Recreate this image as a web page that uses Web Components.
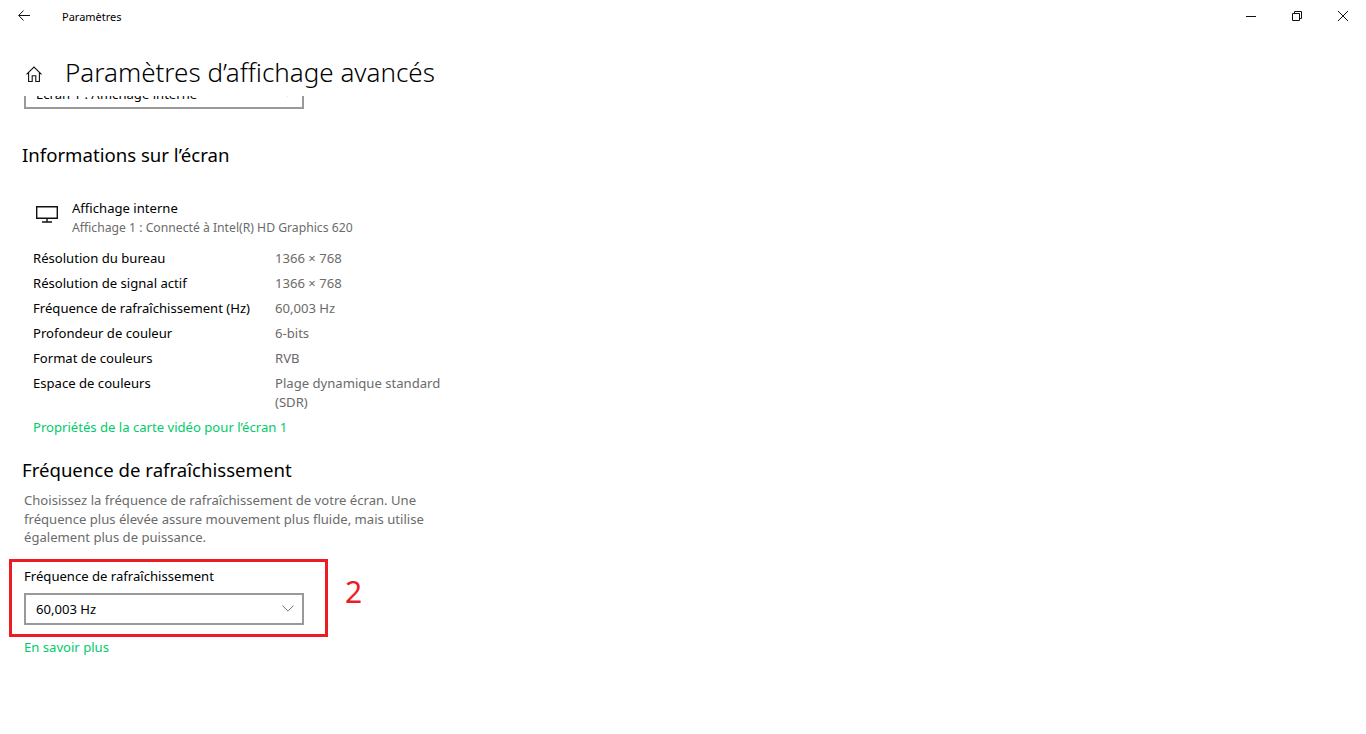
<!DOCTYPE html>
<html>
    <head>
        <style>
            html, body { margin: 0; height: 100%; background: #fff; }
            body { font-family: "Noto Sans", "Open Sans", sans-serif; color: #000; overflow: hidden; }
        </style>
    </head>
    <body>
        <settings-app>
            <title-bar slot="bar">Paramètres</title-bar>
            <page-header slot="head">Paramètres d’affichage avancés</page-header>

            <combo-box>Écran 1 : Affichage interne</combo-box>

            <section-title style="margin-top:32px">Informations sur l’écran</section-title>
            <display-card name="Affichage interne" sub="Affichage 1 : Connecté à Intel(R) HD Graphics 620"></display-card>
            <info-row label="Résolution du bureau">1366 × 768</info-row>
            <info-row label="Résolution de signal actif">1366 × 768</info-row>
            <info-row label="Fréquence de rafraîchissement (Hz)">60,003 Hz</info-row>
            <info-row label="Profondeur de couleur">6-bits</info-row>
            <info-row label="Format de couleurs">RVB</info-row>
            <info-row label="Espace de couleurs">Plage dynamique standard<br>(SDR)</info-row>
            <green-link style="margin:3px 0 0 11px">Propriétés de la carte vidéo pour l’écran 1</green-link>

            <section-title style="margin-top:19px">Fréquence de rafraîchissement</section-title>
            <help-text>Choisissez la fréquence de rafraîchissement de votre écran. Une fréquence plus élevée assure mouvement plus fluide, mais utilise également plus de puissance.</help-text>
            <field-label>Fréquence de rafraîchissement</field-label>
            <combo-box>60,003 Hz</combo-box>
            <green-link style="margin:13px 0 0 2px">En savoir plus</green-link>

            <red-note slot="over"></red-note>
        </settings-app>

        <script>
            class SettingsApp extends HTMLElement {
                constructor() {
                    super();
                    const shadowRoot = this.attachShadow({ mode: 'open' });
                    shadowRoot.innerHTML = `
                        <style>
                            :host { display: flex; flex-direction: column; height: 734px; position: relative; }
                            .scroll { flex: 1; overflow: hidden; min-height: 0; }
                            .inner { margin: -19px 0 0 22px; width: 420px; display: flex; flex-direction: column; align-items: flex-start; }
                        </style>
                        <slot name="bar"></slot>
                        <slot name="head"></slot>
                        <div class="scroll"><div class="inner"><slot></slot></div></div>
                        <slot name="over"></slot>
                    `;
                }
            }
            window.customElements.define('settings-app', SettingsApp);

            class TitleBar extends HTMLElement {
                constructor() {
                    super();
                    const shadowRoot = this.attachShadow({ mode: 'open' });
                    shadowRoot.innerHTML = `
                        <style>
                            :host { display: flex; align-items: center; height: 32px; font-size: 11px; }
                            .back { width: 48px; height: 32px; display: flex; align-items: center; justify-content: center; margin-right: 14px; }
                            .title { flex: 1; padding-top: 1px; }
                            .btn { width: 46px; height: 32px; display: flex; align-items: center; justify-content: center; }
                            svg { display: block; fill: none; stroke: #111; stroke-width: 1; }
                        </style>
                        <div class="back">
                            <svg width="12" height="11" viewBox="0 0 12 11" style="margin-top:-1px"><path d="M12 5.5H.8M5.5 .5 .7 5.5 5.5 10.5"/></svg>
                        </div>
                        <div class="title"><slot></slot></div>
                        <div class="btn"><svg width="10" height="10" viewBox="0 0 10 10"><path d="M0 5.5H10"/></svg></div>
                        <div class="btn"><svg width="10" height="10" viewBox="0 0 10 10"><path d="M.5 2.5H7.5V9.5H.5ZM2.5 2.5V.5H9.5V7.5H7.5"/></svg></div>
                        <div class="btn"><svg width="10" height="10" viewBox="0 0 10 10"><path d="M0 0 10 10M10 0 0 10"/></svg></div>
                    `;
                }
            }
            window.customElements.define('title-bar', TitleBar);

            class PageHeader extends HTMLElement {
                constructor() {
                    super();
                    const shadowRoot = this.attachShadow({ mode: 'open' });
                    shadowRoot.innerHTML = `
                        <style>
                            :host { display: flex; align-items: center; height: 64px; padding: 26px 0 10px 26px; box-sizing: border-box; font-size: 26px; font-weight: 300; line-height: 28px; }
                            svg { display: block; margin: 3px 23px 0 0; fill: none; stroke: #111; stroke-width: 1.1; }
                            span { white-space: nowrap; }
                        </style>
                        <svg width="16" height="16" viewBox="0 0 16 16"><path d="M.5 8.4 8 1l7.5 7.4M2.6 6.5V15.5H6.2V9.8H9.8V15.5H13.4V6.5"/></svg>
                        <span><slot></slot></span>
                    `;
                }
            }
            window.customElements.define('page-header', PageHeader);

            class ComboBox extends HTMLElement {
                constructor() {
                    super();
                    const shadowRoot = this.attachShadow({ mode: 'open' });
                    shadowRoot.innerHTML = `
                        <style>
                            :host { display: flex; align-items: center; justify-content: space-between; width: 280px; height: 32px; box-sizing: border-box; border: 2px solid #999; margin-left: 2px; padding: 0 8px 0 10px; font-size: 13.1px; line-height: 13px; }
                            span { padding-top: 2px; }
                            svg { display: block; fill: none; stroke: #777; stroke-width: 1; }
                        </style>
                        <span><slot></slot></span>
                        <svg width="12" height="7" viewBox="0 0 12 7"><path d="M.4 .5 6 6.1 11.6 .5"/></svg>
                    `;
                }
            }
            window.customElements.define('combo-box', ComboBox);

            class SectionTitle extends HTMLElement {
                constructor() {
                    super();
                    const shadowRoot = this.attachShadow({ mode: 'open' });
                    shadowRoot.innerHTML = `
                        <style>
                            :host { display: block; font-size: 18.6px; line-height: 28px; white-space: nowrap; }
                        </style>
                        <slot></slot>
                    `;
                }
            }
            window.customElements.define('section-title', SectionTitle);

            class DisplayCard extends HTMLElement {
                constructor() {
                    super();
                    const shadowRoot = this.attachShadow({ mode: 'open' });
                    shadowRoot.innerHTML = `
                        <style>
                            :host { display: flex; margin: 30px 0 9px 14px; }
                            svg { display: block; margin: 7px 14px 0 0; fill: none; stroke: #111; stroke-width: 1.4; }
                            .name { font-size: 13.1px; line-height: 19px; }
                            .sub { font-size: 12.2px; line-height: 19px; color: #6b6b6b; }
                        </style>
                        <svg width="22" height="17" viewBox="0 0 22 17"><path d="M.7 .7H21.3V12.3H.7ZM11 12.3V16M6 16H16"/></svg>
                        <div>
                            <div class="name">${this.getAttribute('name')}</div>
                            <div class="sub">${this.getAttribute('sub')}</div>
                        </div>
                    `;
                }
            }
            window.customElements.define('display-card', DisplayCard);

            class InfoRow extends HTMLElement {
                constructor() {
                    super();
                    const shadowRoot = this.attachShadow({ mode: 'open' });
                    shadowRoot.innerHTML = `
                        <style>
                            :host { display: grid; grid-template-columns: 242px 1fr; margin-left: 11px; padding: 3px 0; font-size: 13.1px; line-height: 19px; }
                            .value { color: #6b6b6b; }
                        </style>
                        <div>${this.getAttribute('label')}</div>
                        <div class="value"><slot></slot></div>
                    `;
                }
            }
            window.customElements.define('info-row', InfoRow);

            class GreenLink extends HTMLElement {
                constructor() {
                    super();
                    const shadowRoot = this.attachShadow({ mode: 'open' });
                    shadowRoot.innerHTML = `
                        <style>
                            :host { display: block; font-size: 13.1px; line-height: 19px; color: #00cc6a; white-space: nowrap; }
                        </style>
                        <slot></slot>
                    `;
                }
            }
            window.customElements.define('green-link', GreenLink);

            class HelpText extends HTMLElement {
                constructor() {
                    super();
                    const shadowRoot = this.attachShadow({ mode: 'open' });
                    shadowRoot.innerHTML = `
                        <style>
                            :host { display: block; width: 405px; margin: 7px 0 0 2px; font-size: 13.1px; line-height: 18.5px; color: #6b6b6b; }
                        </style>
                        <slot></slot>
                    `;
                }
            }
            window.customElements.define('help-text', HelpText);

            class FieldLabel extends HTMLElement {
                constructor() {
                    super();
                    const shadowRoot = this.attachShadow({ mode: 'open' });
                    shadowRoot.innerHTML = `
                        <style>
                            :host { display: block; margin: 20px 0 7px 2px; font-size: 13.1px; line-height: 19px; white-space: nowrap; }
                        </style>
                        <slot></slot>
                    `;
                }
            }
            window.customElements.define('field-label', FieldLabel);

            // the red marking drawn on top of the screenshot
            class RedNote extends HTMLElement {
                constructor() {
                    super();
                    const shadowRoot = this.attachShadow({ mode: 'open' });
                    shadowRoot.innerHTML = `
                        <style>
                            .box { position: absolute; left: 9px; top: 559px; width: 319px; height: 78px; box-sizing: border-box; border: 3px solid #ed1c24; }
                            .num { position: absolute; left: 345px; top: 572px; font-size: 30px; line-height: 40px; color: #ed1c24; }
                        </style>
                        <div class="box"></div>
                        <div class="num">2</div>
                    `;
                }
            }
            window.customElements.define('red-note', RedNote);
        </script>
    </body>
</html>
